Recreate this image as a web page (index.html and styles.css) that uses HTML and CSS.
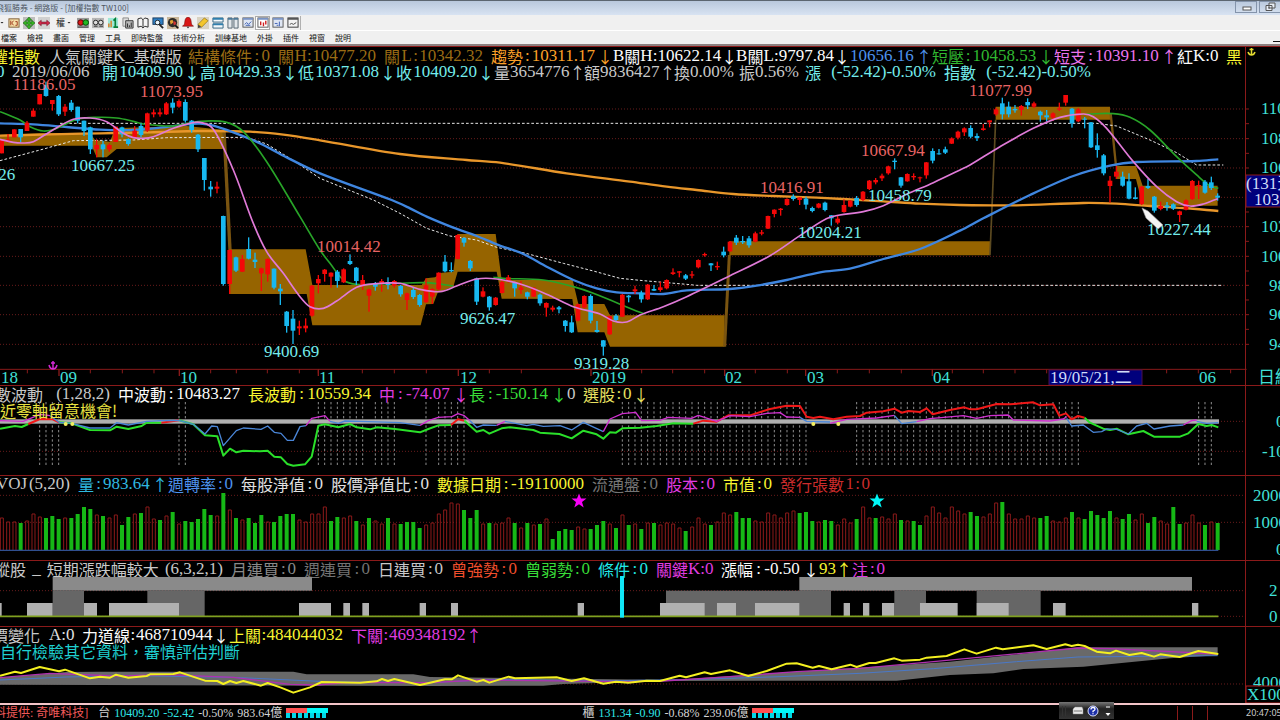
FILE: index.html
```html
<!DOCTYPE html>
<html lang="zh-Hant">
<head>
<meta charset="utf-8">
<title>加權指數 TW100</title>
<link rel="stylesheet" href="styles.css">
</head>
<body>
<header class="titlebar">
  <span class="title">飛狐勝券 - 網路版 - [加權指數 TW100]</span>
  <div class="winbtns">
    <button class="winbtn" aria-label="最小化"><svg width="22" height="12"><rect x="7" y="6" width="8" height="3" fill="#fff" stroke="#555"/></svg></button>
    <button class="winbtn" aria-label="還原"><svg width="22" height="12"><path d="M9 2h6v5h-6zM6 4.500h6v5h-6z" fill="#e8eef6" stroke="#555"/><path d="M8 6.500h2v1h-2z" fill="#555"/></svg></button>
  </div>
</header>
<nav class="toolbar" aria-label="工具列">
  <span class="caret"></span>
  <button class="tool" aria-label="K線"><svg viewBox="0 0 13 13"><rect x="1" y="2" width="11" height="9" fill="#f6dfa8" stroke="#7a5a33"/><path d="M3 4v5M6 4l-2 2.500 2 2.500M8 5h2v4h-2" stroke="#9a3418" fill="none"/></svg></button>
  <button class="tool" aria-label="移動"><svg viewBox="0 0 13 13"><rect width="13" height="13" fill="#bdbdbd"/><path d="M6.500 0l3 3.500h-2v2h2v-2l3.500 3-3.500 3v-2h-2v2h2l-3 3.500-3-3.500h2v-2h-2v2l-3.500-3 3.500-3v2h2v-2h-2z" fill="#39b525" stroke="#145c10" stroke-width=".6"/></svg></button>
  <button class="tool" aria-label="水平線"><svg viewBox="0 0 13 13"><rect width="13" height="13" fill="#d0d0d0"/><path d="M0 6.500l3.500-3v2h6v-2l3.500 3-3.500 3v-2h-6v2z" fill="#d12a4a" stroke="#6a1024" stroke-width=".6"/></svg></button>
  <button class="adjust">權<span class="caret"></span></button>
  <button class="tool" aria-label="紅綠燈"><svg viewBox="0 0 13 13"><rect y="1" width="13" height="11" fill="#9a9a9a"/><circle cx="4" cy="6" r="3" fill="#e01818" stroke="#500"/><circle cx="9.500" cy="6" r="3" fill="#22b822" stroke="#040"/><path d="M1 11h11" stroke="#444"/></svg></button>
  <button class="tool" aria-label="望遠鏡"><svg viewBox="0 0 13 13"><rect y="1" width="13" height="11" fill="#b5b5b5"/><circle cx="4" cy="6" r="2.500" fill="#ddd" stroke="#222"/><circle cx="9.500" cy="6" r="2.500" fill="#ddd" stroke="#222"/><path d="M2 10h4M8 10h4" stroke="#333"/></svg></button>
  <button class="tool" aria-label="報表"><svg viewBox="0 0 13 13"><rect x="1" y="1" width="11" height="11" fill="#9fe8d8"/><path d="M2 11v-4M4.500 11v-7" stroke="#e07a20" stroke-width="1.500"/><path d="M7 4l2-2v9M7 11h5" stroke="#088038" stroke-width="1.800" fill="none"/></svg></button>
  <button class="tool" aria-label="複製"><svg viewBox="0 0 13 13"><path d="M1 1h6v9h-6z" fill="#ddd" stroke="#888"/><path d="M4 4h8v8h-8z" fill="#bbb" stroke="#333"/><path d="M6 11v-4M8 11v-2M10 11v-5" stroke="#222"/></svg></button>
  <button class="tool" aria-label="說明書"><svg viewBox="0 0 13 13"><path d="M1 2l3.500-1 2 2 2-2 3.500 1v9l-3.500-1-2 2-2-2-3.500 1zM6.500 3v8" fill="#f4f4f4" stroke="#222"/></svg></button>
  <button class="tool" aria-label="查詢"><svg viewBox="0 0 13 13"><rect x="1" y="1" width="11" height="7" fill="#2f7fc4" stroke="#17395c"/><circle cx="6" cy="6" r="2.500" fill="#e8f6ff" stroke="#222"/><path d="M8 8l4 4" stroke="#222" stroke-width="2"/></svg></button>
  <button class="tool" aria-label="搜尋"><svg viewBox="0 0 13 13"><rect width="13" height="13" fill="#c9b79a"/><circle cx="6" cy="6" r="5" fill="#2d2a26"/><path d="M3 4l3-1 1 3-3 2z" fill="#e0a030"/><path d="M7 4l3 2-1 3-2-1z" fill="#c33"/><path d="M9 9l3 3" stroke="#111" stroke-width="2"/></svg></button>
  <button class="tool" aria-label="警示"><svg viewBox="0 0 13 13"><path d="M6.500 0c4 1 3 5 4 8l2 2h-12l2-2c1-3 0-7 4-8z" fill="#d81616" stroke="#6c0808" stroke-width=".6"/><path d="M5 10.500h3l-1.500 2z" fill="#333"/></svg></button>
  <button class="tool" aria-label="畫筆"><svg viewBox="0 0 13 13"><rect width="13" height="13" fill="#d8d2c2"/><path d="M1 8l7-7 4 3-7 7z" fill="#f3c62c" stroke="#8a6a10" stroke-width=".7"/><path d="M1 8l4 3-4 1z" fill="#444"/></svg></button>
  <button class="tool" aria-label="橫排"><svg viewBox="0 0 13 13"><path d="M1 1h11v4.500h-11zM1 7.500h11v4.500h-11z" fill="#f4f8fb" stroke="#2f627f"/><path d="M1 2h11M1 8h11" stroke="#2f7fae" stroke-width="2"/></svg></button>
  <button class="tool" aria-label="直排"><svg viewBox="0 0 13 13"><path d="M1 1h4.500v11h-4.500zM7.500 1h4.500v11h-4.500z" fill="#e3e8ec" stroke="#4e5f6b"/><path d="M1 2h5M7 2h5" stroke="#4b7898" stroke-width="2"/></svg></button>
  <button class="tool" aria-label="日線圖"><svg viewBox="0 0 13 13"><rect x="1" y="1" width="11" height="10" fill="#dfe6f3" stroke="#555"/><path d="M1 2h11" stroke="#7a93c4" stroke-width="2"/><path d="M3 8l2-2 2 2 3-3M4 9h5" stroke="#3a5bb0" fill="none"/></svg></button>
  <button class="tool pressed" aria-label="K線圖"><svg viewBox="0 0 13 13"><rect x="1" y="1" width="11" height="10" fill="#fff" stroke="#555"/><path d="M1 2h11" stroke="#7a93c4" stroke-width="2"/><path d="M4 5v4M7 6v4M9.500 4v4" stroke="#d02020" stroke-width="1.500"/></svg></button>
  <button class="tool" aria-label="分時圖"><svg viewBox="0 0 13 13"><rect x="1" y="1" width="11" height="10" fill="#dfe6f3" stroke="#555"/><path d="M1 2h11" stroke="#7a93c4" stroke-width="2"/><path d="M3 7h3M5 9h2M8 5v5" stroke="#3a5bb0"/></svg></button>
  <button class="tool" aria-label="走勢圖"><svg viewBox="0 0 13 13"><rect x="1" y="1" width="11" height="10" fill="#f4f4f4" stroke="#333"/><path d="M1 2h11" stroke="#555" stroke-width="2"/><path d="M3 8l2-1 2 1 3-2" stroke="#444" fill="none"/></svg></button>
  <span class="toolend"></span>
</nav>
<nav class="menubar" aria-label="選單">
  <button>檔案</button><button>檢視</button><button>畫面</button><button>管理</button><button>工具</button><button>即時監盤</button><button>技術分析</button><button>訓練基地</button><button>外掛</button><button>插件</button><button>視窗</button><button>說明</button>
  <span class="mdi-min"></span>
</nav>

<main class="charts">
  <section class="panel panel-price">
    <div class="readout" id="r-name" data-start="-24"></div>
    <div class="readout" id="r-quote" data-start="-4"></div>
    <svg class="plot" viewBox="0 0 1280 305">
      <g transform="scale(.33333)" id="price"></g>
      <g class="t high">
        <text x="13" y="10">11186.05</text><text x="140" y="17">11073.95</text><text x="317" y="172">10014.42</text>
        <text x="760" y="113">10416.91</text><text x="861" y="76">10667.94</text><text x="969" y="16">11077.99</text>
      </g>
      <g class="t low">
        <text x="-40" y="100">9999.26</text><text x="71" y="91">10667.25</text><text x="264" y="277">9400.69</text><text x="460" y="244">9626.47</text>
        <text x="574" y="289">9319.28</text><text x="798" y="158">10204.21</text><text x="868" y="121">10458.79</text><text x="1147" y="155">10227.44</text>
      </g>
      <path d="M1142 128l6 3 15 14-5 4-12-11z" fill="#f4f4f4" stroke="#999" stroke-width=".6"/>
      <path d="M53 281v8M51 283h4M49 285q1 4 4 4q3 0 4-4" stroke="#d42ad4" stroke-width="1.500" fill="none"/>
      <g class="t axis">
        <text x="1" y="303">18</text><text x="60" y="303">09</text><text x="180" y="303">10</text><text x="319" y="303">11</text><text x="460" y="303">12</text>
        <text x="592" y="303">2019</text><text x="725" y="303">02</text><text x="807" y="303">03</text><text x="933" y="303">04</text><text x="1199" y="303">06</text>
        <text x="1258" y="303">日線</text>
        <text x="1261" y="34">11000</text><text x="1261" y="64">10800</text><text x="1261" y="93">10600</text><text x="1261" y="152">10200</text>
        <text x="1261" y="182">10000</text><text x="1269" y="211">9800</text><text x="1269" y="240">9600</text><text x="1269" y="270">9400</text>
      </g>
      <rect x="1049" y="290" width="93" height="15" fill="#00007c" stroke="#4a1050"/><text class="t cursor" x="1050" y="303">19/05/21,二</text>
      <rect x="1246" y="95" width="40" height="32" fill="#00007c" stroke="#8b1a1a"/>
      <text class="t cursor" x="1246" y="109">(131天</text><text class="t cursor" x="1254" y="125">10311</text>
    </svg>
    <svg class="anchor" viewBox="0 0 9 9"><path d="M4.500 1v7M2.500 2.500h4M1 5q1 3 3.500 3q2.500 0 3.500-3" stroke="#e4dc30" stroke-width="1.500" fill="none"/></svg>
  </section>

  <section class="panel">
    <div class="readout" id="r-wave" data-start="-21"></div>
    <p class="note note-over">接近零軸留意機會!</p>
    <svg class="plot" viewBox="0 0 1280 73">
      <g transform="translate(0 -22) scale(.33333)" id="wave"></g>
      <g class="t axis"><text x="1276" y="25">0</text><text x="1262" y="55">-1000</text></g>
    </svg>
  </section>

  <section class="panel">
    <div class="readout" id="r-volume" data-start="-4"></div>
    <svg class="plot" viewBox="0 0 1280 68">
      <g transform="translate(0 -112) scale(.33333)" id="volume"></g>
      <path d="M579 1.500l2 5h5.500l-4.500 3.500 1.700 5.500-4.700-3.300-4.700 3.300 1.700-5.500-4.500-3.500h5.500z" fill="#f800f8"/>
      <path d="M877 1.500l2 5h5.500l-4.500 3.500 1.700 5.500-4.700-3.300-4.700 3.300 1.700-5.500-4.500-3.500h5.500z" fill="#00f8f8"/>
      <g class="t axis"><text x="1253" y="9">2000</text><text x="1253" y="36">1000</text><text x="1276" y="63">0</text></g>
    </svg>
  </section>

  <section class="panel">
    <div class="readout" id="r-trend" data-start="-6"></div>
    <svg class="plot" viewBox="0 0 1280 49">
      <g transform="translate(0 -197) scale(.33333)" id="trend"></g>
      <g class="t axis"><text x="1269" y="19">2</text><text x="1269" y="45">0</text></g>
    </svg>
  </section>

  <section class="panel">
    <div class="readout" id="r-force" data-start="-8"></div>
    <p class="note note-cyan">自行檢驗其它資料，審慎評估判斷</p>
    <svg class="plot" viewBox="0 0 1280 44">
      <g transform="translate(0 -279) scale(.33333)" id="force"></g>
      <g class="t axis"><text x="1253" y="29">4000</text></g>
      <rect x="1246" y="27" width="40" height="17" fill="#000" stroke="#b01c1c"/>
      <text class="t axis" x="1247" y="41">X1000</text>
    </svg>
  </section>
</main>

<footer class="status">
  <div class="quote quote-main"><span class="src">料提供: 奇唯科技]</span><span>台</span><span class="c">10409.20</span><span class="c">-52.42</span><span>-0.50%</span><span>983.64億</span><i class="meter"></i></div>
  <div class="quote"><span>櫃</span><span class="c">131.34</span><span class="c">-0.90</span><span>-0.68%</span><span>239.06億</span><i class="meter"></i></div>
  <div class="cells"><i></i><i></i><i></i></div>
  <time>20:47:05</time>
  <div class="tray">
    <svg viewBox="0 0 55 17"><g fill="#333"><path d="M3 4h1v10h-1zM6 4h1v10h-1z"/></g><path d="M14 7l2-2h7l1 2v5h-10z" fill="#e8e8e8" stroke="#888" stroke-width=".5"/><path d="M15 9h8" stroke="#777"/><circle cx="34" cy="9" r="5" fill="#1c2fa8" stroke="#dfe4ff"/><path d="M32 7.500q0-2 2-2t2 1.700q0 1-2 2v1M34 11.300v1" stroke="#fff" stroke-width="1.300" fill="none"/><path d="M47 5h4" stroke="#fff"/><path d="M46.500 11h5l-2.500 3z" fill="#fff"/></svg>
  </div>
</footer>
<script src="chart.js"></script>
</body>
</html>
```

FILE: styles.css
```css
* { box-sizing: border-box; margin: 0; padding: 0; }
body { background: #000; color: #ccc; font-family: "Noto Sans CJK TC", sans-serif; overflow-x: hidden; }
button { border: 0; background: none; font: inherit; color: inherit; }

.titlebar { display: flex; justify-content: space-between; height: 15px; border-top: 1px solid #5c6670; background: linear-gradient(#b9c8dc, #d8e3f2); }
.title { margin-left: -4px; font-size: 8px; line-height: 14px; color: #4d565f; white-space: nowrap; }
.winbtns { display: flex; gap: 2px; margin-right: -1px; }
.winbtn { width: 22px; height: 12px; border: 1px solid #8494ab; display: flex; align-items: center; justify-content: center; overflow: hidden; }

.toolbar { display: flex; align-items: center; height: 16px; background: #f0f0f0; border-bottom: 1px solid #fff; }
.tool { width: 15px; height: 14px; flex: none; display: flex; align-items: center; justify-content: center; }
.tool svg { width: 12px; height: 12px; }
.pressed { background: #fff; border: 1px solid #aaa; }
.toolend { width: 1px; height: 14px; background: #b0b0b0; }
.toolbar > .caret { margin-right: 2px; }
.caret { width: 4px; height: 2px; background: #222; clip-path: polygon(0 0, 100% 0, 50% 100%); }
.adjust { display: flex; align-items: center; gap: 2px; width: 24px; padding-left: 5px; font-size: 9px; line-height: 12px; color: #222; }

.menubar { display: flex; align-items: center; gap: 10px; height: 15px; padding-left: 1px; background: #f0f0f0; border-bottom: 2px solid #8c8080; font-size: 8px; line-height: 12px; color: #111; }
.mdi-min { margin-left: auto; align-self: flex-end; width: 7px; height: 3px; border-top: 1px solid #111; }

.charts { position: relative; }
.charts::after { content: ""; position: absolute; top: 0; bottom: 0; left: 97.25%; width: 1px; background: #8b1a1a; }
.panel { position: relative; border-top: 1px solid #8b1a1a; }
.panel-price { padding-top: 1px; }
.readout { display: flex; height: 16px; font-size: 16px; line-height: 16px; white-space: nowrap; }
.item { display: flex; flex: none; justify-content: space-between; }
.num { font-family: "Liberation Serif", serif; font-size: 17px; }
.note { font-size: 16px; line-height: 16px; white-space: nowrap; }
.note-over { position: absolute; left: -16px; top: 16px; color: #e8e040; }
.note-cyan { color: #1fd0d0; }
.plot { display: block; width: 100%; height: auto; overflow: visible; }
.anchor { position: absolute; top: 0; left: 97.4%; width: 9px; height: 9px; }

.t { font-family: "Liberation Serif", "Noto Sans CJK TC", serif; font-size: 17px; }
.high { fill: #e86464; }
.low { fill: #74ecec; }
.axis { fill: #40e0d8; }
.cursor { fill: #d0dcf8; }

.status { position: relative; display: flex; align-items: center; height: 17px; border-top: 2px solid #f3c4c8; font-size: 12px; line-height: 14px; white-space: nowrap; }
.quote { display: flex; align-items: center; gap: 4px; font-family: "Liberation Serif", "Noto Sans CJK TC", serif; font-size: 12px; color: #d4d4d4; }
.quote-main { flex: 0 0 45.5%; }
.src { color: #f05a5a; margin-left: -6px; margin-right: 6px; }
.c { color: #2fe8e8; }
.meter { width: 42px; height: 10px; background: linear-gradient(90deg, #ff5050 50%, #00f8f8 50%) 0 0 / 100% 5px no-repeat, repeating-linear-gradient(90deg, #00d8e8 0 4px, #000 4px 6px) 0 100% / 100% 5px no-repeat; }
.cells { display: flex; gap: 14px; margin-left: auto; margin-right: 38px; }
.cells i { width: 1px; height: 14px; background: #8b1a1a; }
time { flex: none; width: 34px; font-family: "Noto Sans", sans-serif; font-size: 9px; }
.tray { position: absolute; left: 82.7%; top: -3px; width: 55px; height: 17px; background: linear-gradient(#777, #222 40%, #333); }
.tray svg { display: block; }
```

FILE: chart.js
```js
const NS = "http://www.w3.org/2000/svg";
const CELL = 8.17;

/* ---- readout rows: [text, colour, trailing space] ---- */
const W = "#fcfcfc", G = "#c8c8c8", D = "#747474", Y = "#f8f430", C = "#74ecec", M = "#e03ce0",
      R = "#cc2c2c", GR = "#38dc38", BR = "#9a6c14", OR = "#fca028", BL = "#4e92ec";
const readouts = {
  "r-name": [["加權指數", Y, 1], ["人氣關鍵K_基礎版", G, 1], ["結構條件:0", BR, 1], ["關H:10477.20", BR, 1], ["關L:10342.32", BR, 1],
    ["趨勢:10311.17↓", OR, 0], ["B關H:10622.14↓", W, 0], ["B關L:9797.84↓", W, 0], ["10656.16↑", BL, 0], ["短壓:10458.53↓", "#30b830", 0],
    ["短支:10391.10↑", "#ec74ec", 0], ["紅K:0", W, 1], ["黑", Y, 0]],
  "r-quote": [["0", C, 1], ["2019/06/06", G, 1], ["開10409.90↓", C, 0], ["高10429.33↓", C, 0], ["低10371.08↓", C, 0], ["收10409.20↓", C, 0],
    ["量3654776↑", G, 0], ["額9836427↑", G, 0], ["換0.00%", G, 1], ["振0.56%", G, 1], ["漲(-52.42)-0.50%", C, 1], ["指數(-52.42)-0.50%", C, 0]],
  "r-wave": [["指數波動(1,28,2)", G, 1], ["中波動:10483.27", W, 1], ["長波動:10559.34", Y, 1], ["中:-74.07↓", M, 0], ["長:-150.14↓", GR, 0],
    ["0", G, 1], ["選股:0↓", "#e8e060", 0]],
  "r-volume": [["VOJ(5,20)", G, 1], ["量:983.64↑", "#30b8e0", 0], ["週轉率:0", BL, 1], ["每股淨值:0", "#e0e0e0", 1], ["股價淨值比:0", "#e0e0e0", 1],
    ["數據日期:-19110000", Y, 1], ["流通盤:0", D, 1], ["股本:0", M, 1], ["市值:0", Y, 1], ["發行張數1:0", R, 0]],
  "r-trend": [["縱股_短期漲跌幅較大(6,3,2,1)", G, 1], ["月連買:0", "#8a8a8a", 1], ["週連買:0", D, 1], ["日連買:0", G, 1], ["曾強勢:0", "#f04e2c", 1],
    ["曾弱勢:0", GR, 1], ["條件:0", "#20e8e8", 1], ["關鍵K:0", M, 1], ["漲幅:-0.50↓", W, 0], ["93↑", Y, 0], ["注:0", M, 0]],
  "r-force": [["價變化", G, 1], ["A:0", "#e0e0e0", 1], ["力道線:468710944↓", W, 0], ["上關:484044032", Y, 1], ["下關:469348192↑", M, 0]]
};
for (const [id, items] of Object.entries(readouts)) {
  const row = document.getElementById(id);
  let cells = 0, edge = 0;
  items.forEach(([text, color, gap], i) => {
    const item = document.createElement("span");
    item.className = "item";
    item.style.color = color;
    const n = [...text].reduce((s, ch) => s + (ch.charCodeAt(0) > 127 ? 2 : 1), 0);
    item.style.width = Math.round((cells + n) * CELL) - edge + "px";
    if (gap) item.style.marginRight = "8px";
    if (i === 0) item.style.marginLeft = row.dataset.start + "px";
    cells += n + gap;
    edge = Math.round((cells - gap) * CELL) + (gap ? 8 : 0);
    for (const part of text.match(/[↑↓]|[^\x00-\x7f↑↓]+|[A-Z_]+|:|[^A-Z_:↑↓\u0080-\uffff]+/g)) {
      const s = document.createElement("span");
      if (part.charCodeAt(0) < 128) s.className = "num";
      s.textContent = part;
      item.append(s);
    }
    row.append(item);
  });
}

/* ---- drawing helpers; three drawing units to one pixel ---- */
const X = k => 5 + 19 * k;
const add = (id, tag, attrs) => {
  const e = document.createElementNS(NS, tag);
  for (const a in attrs) e.setAttribute(a, attrs[a]);
  document.getElementById(id).append(e);
};
const path = (id, d, stroke, w, more) => add(id, "path", { d, stroke, "stroke-width": w, fill: "none", ...more });
const rect = (id, x, y, x2, y2, fill) => add(id, "rect", { x, y, width: x2 - x, height: y2 - y, fill });
const poly = (id, points, fill) => add(id, "polygon", { points, fill });
const line = (id, pts, stroke, w, more) => path(id, "M" + pts, stroke, w, { "stroke-linejoin": "round", ...more });
const smooth = (id, pts, stroke, w, more) => {
  const p = pts.split(" ").map(s => s.split(",").map(Number));
  let d = "M" + p[0];
  for (let i = 0; i < p.length - 1; i++) {
    const a = p[i - 1] || p[i], b = p[i], c = p[i + 1], e = p[i + 2] || c;
    const t = (c[0] - b[0]) / 3, m1 = (c[1] - a[1]) / (c[0] - a[0]), m2 = (e[1] - b[1]) / (e[0] - b[0]);
    d += `C${b[0] + t},${b[1] + m1 * t} ${c[0] - t},${c[1] - m2 * t} ${c}`;
  }
  path(id, d, stroke, w, more);
};
const grid = (id, ys) => ys.forEach(y => path(id, `M0 ${y}H3740`, "#6a1c1c", 3, { "stroke-dasharray": "3 6" }));

/* ---- price panel ---- */
grid("price", [87, 176, 264, 352, 440, 529, 616, 704, 793]);
[87, 131, 176, 220, 264, 308, 352, 396, 440, 484, 529, 573, 616, 660, 704, 748, 793].forEach(y => path("price", `M3735 ${y}h12`, "#8b1a1a", 3));
const BAND = "#966400";
poly("price", "0,165 120,160 270,158 285,180 330,185 345,145 430,142 560,138 672,150 672,207 350,207 320,232 290,232 275,197 0,197", BAND);
path("price", "M672 150L690 510", "#7a5410", 10);
poly("price", "690,508 917,508 937,615 1265,615 1278,595 1305,592 1325,578 1360,575 1373,462 1487,462 1505,600 1718,600 1735,672 1813,672 1830,706 2174,706 2174,800 1830,800 1813,757 1733,757 1717,657 1505,656 1490,575 1373,575 1360,620 1313,638 1300,672 1278,673 1262,736 937,736 920,642 690,642", BAND);
path("price", "M2174 800L2188 525", "#7a5410", 9);
poly("price", "2188,484 2970,484 2970,526 2188,526", BAND);
path("price", "M2970 526L2987 119", "#5c4a20", 5);
poly("price", "2987,80 3330,80 3330,119 2987,119", BAND);
path("price", "M3332 100L3348 258", "#7a5410", 7);
poly("price", "3348,258 3408,258 3428,317 3653,317 3653,377 3428,377 3408,297 3348,297", BAND);

const dash = { "stroke-dasharray": "8 6" };
line("price", "180,130 3290,130 3350,138 3450,180 3530,218 3590,255 3670,255", "#e8e8e8", 3, dash);
line("price", "0,242 120,210 220,182 400,180 500,173 740,172 800,192 870,235 960,295 1120,360 1200,400 1280,445 1350,468 1430,480 1490,502 1570,518 1690,550 1780,573 1860,595 1930,602 2060,613 2090,616 3670,616", "#e8e8e8", 3, dash);
smooth("price", "0,167 150,163 300,160 450,157 600,153 750,155 850,164 960,181 1200,222 1400,240 1500,248 1700,280 1890,305 2000,320 2090,330 2200,342 2320,348 2450,353 2530,357 2650,364 2760,371 2880,375 3050,376 3250,369 3350,371 3450,378 3550,384 3655,393", "#e8962a", 7);
smooth("price", "0,130 100,133 200,141 300,149 400,150 480,143 560,133 600,131 640,137 700,157 780,190 860,232 960,280 1175,360 1230,385 1280,410 1360,443 1430,468 1490,493 1570,522 1640,560 1720,600 1790,625 1850,637 1920,640 1990,642 2060,631 2190,627 2270,617 2360,600 2460,577 2550,566 2650,537 2760,507 2880,452 2950,415 3090,345 3220,288 3330,257 3410,246 3590,243 3655,238", "#3f86e0", 7);
smooth("price", "0,95 60,120 90,140 130,153 165,147 230,118 290,112 350,114 400,124 430,132 520,138 600,124 680,127 730,155 800,245 900,410 960,510 990,550 1030,600 1070,613 1190,610 1280,608 1360,618", "#28a428", 5);
smooth("price", "1480,592 1510,595 1630,600 1720,620 1780,640 1920,697 1935,702", "#28a428", 5);
smooth("price", "3260,102 3340,101 3390,112 3450,150 3530,230 3590,285 3630,318 3655,325", "#28a428", 5);

/* colour, wick top, body top, body bottom, wick bottom */
const candles = `r178,178,220,220 r162,178,185,188 r148,148,172,172 c147,147,172,187 r123,128,153,153 r85,92,110,110 r42,42,73,73 c5,15,48,50 r60,60,72,92 c45,48,103,108
r72,80,95,108 c60,68,90,95 c80,80,122,130 c122,122,153,168 c140,142,208,222 r178,195,208,232 c182,193,208,232 r190,195,208,215 r140,140,186,186 c140,142,163,172
c175,177,192,197 r138,152,172,172 c130,138,165,172 r98,100,152,156 r88,97,103,112 r85,97,103,110 r66,70,103,105 c55,68,83,100 r58,63,80,83 c58,66,122,128
c120,122,150,158 c162,164,208,216 c234,234,300,332 c303,320,328,350 r305,320,326,340 c407,408,612,617 r508,510,612,642 c530,532,572,576 r525,537,575,576 c472,507,536,538
c518,539,546,564 r563,565,580,633 r535,537,583,605 c565,566,623,628 c612,626,634,675 c693,695,738,758 c690,716,752,792 r722,739,745,765 r715,737,745,757 r615,617,707,710
r585,597,610,640 r567,569,582,605 r577,578,590,623 c570,575,603,623 r565,568,607,609 c523,543,552,555 c561,563,603,615 r585,600,616,630 r626,628,647,695 c606,612,620,632
r597,603,612,635 c592,606,615,628 r600,603,617,623 c615,618,643,650 r638,640,660,690 c621,630,651,657 c642,645,675,680 r595,616,667,668 r625,627,650,672 r577,578,628,630
c525,545,574,577 c547,570,574,577 r463,465,537,538 c472,474,488,500 c540,543,565,573 c593,595,665,675 r622,634,650,652 c648,650,682,692 r651,653,675,677 r600,606,639,640
r585,592,603,608 c605,607,625,650 r603,622,630,642 c635,637,650,658 r622,623,650,651 c641,644,670,677 r667,669,683,710 r677,683,689,695 c678,682,688,700 c720,722,738,755
c707,727,757,759 r671,673,722,724 r646,648,683,685 c643,648,722,730 c723,750,756,758 c780,781,800,827 r707,708,763,765 c702,707,720,725 r642,644,710,711 c645,647,652,667
r617,628,634,642 c632,638,658,668 r612,614,658,660 c615,627,632,633 r605,622,630,635 r598,600,625,628 r565,577,582,585 r573,574,578,592 c582,586,596,600 r573,583,587,595
r538,540,562,565 r518,522,526,530 c549,550,556,573 r545,558,562,570 c500,515,526,532 r483,485,514,515 c465,473,488,495 c468,483,487,492 c468,475,496,503 r455,460,485,487
r450,457,461,466 r407,408,446,447 r388,389,402,412 r384,386,390,407 r355,357,375,377 c343,349,357,362 r352,352,360,375 c350,356,374,388 c380,384,393,397 r369,371,383,385
c365,368,390,394 c405,406,415,437 r405,416,428,433 r358,375,396,398 r360,362,380,382 c348,354,375,380 r333,335,360,363 r300,302,327,330 r294,300,307,313 r281,287,295,303
r257,259,280,284 c235,242,246,268 c291,292,317,323 r280,282,304,305 r280,288,292,300 r290,292,295,307 r246,247,286,296 c205,213,242,250 c207,220,223,224 c200,208,218,222
r172,175,191,192 r152,155,173,178 r142,145,157,168 c136,144,170,175 c160,168,174,183 r132,145,150,152 r121,121,127,142 r83,88,103,107 c53,70,103,118 c65,80,103,112
c75,87,91,98 r75,78,90,107 c55,66,76,87 r65,70,80,84 c92,95,106,125 c90,106,112,125 r97,100,113,123 r68,85,89,93 r45,45,68,77 c84,86,130,143
r84,88,124,126 c111,116,119,145 c126,127,202,204 c160,196,210,233 c222,226,280,286 r288,302,318,368 r258,275,290,297 c275,290,317,320 c280,304,356,358 c322,352,357,358
r318,320,372,375 c297,318,324,327 c348,350,392,398 r365,378,387,391 c366,376,382,392 c370,373,386,390 r392,394,405,426 r358,361,389,391 r300,303,357,360 r302,315,319,357
c300,305,338,341 c290,307,324,330 c340,347,353,362`.split(/\s+/);
candles.forEach((s, k) => {
  const [h, t, b, l] = s.slice(1).split(",").map(Number), col = s[0] === "r" ? "#f40808" : "#18b8f0";
  rect("price", X(k) - 2, h, X(k) + 2, l, col);
  rect("price", X(k) - 7, t, X(k) + 7, b, col);
});
smooth("price", "0,178 40,187 70,189 100,185 150,155 220,118 270,114 320,125 370,160 400,173 430,175 460,170 520,145 570,130 600,127 640,148 700,270 760,430 800,515 850,580 900,650 930,680 970,685 1010,663 1070,622 1130,611 1200,610 1260,628 1320,635 1370,618 1430,597 1490,597 1570,615 1650,647 1720,680 1800,702 1840,723 1880,726 1920,705 1990,680 2060,650 2190,587 2310,527 2410,460 2490,412 2590,395 2650,377 2720,343 2800,308 2880,270 2910,255 3000,200 3100,145 3180,112 3250,102 3280,110 3320,145 3400,245 3470,320 3530,365 3570,378 3610,372 3653,356", "#e07ad8", 5);
path("price", "M0 868H3740", "#8b1a1a", 3);
[82, 271, 367, 462, 632, 709, 802, 898, 955, 1087, 1183, 1279, 1468, 1564, 1925, 2018, 2114, 2266, 2362, 2512, 2608, 2704, 2857, 2950, 3045, 3140, 3500, 3595, 3692].forEach(x => path("price", `M${x} 868v12`, "#8b1a1a", 3));
[177, 538, 955, 1375, 1773, 2174, 2417, 2797].forEach(x => path("price", `M${x} 868v20`, "#8b1a1a", 4));

/* ---- wave panel ---- */
grid("wave", [124, 214]);
const signal = [6, 7, 8, 9, 28, 29, 50, 51, 52, 53, 54, 55, 56, 57, 59, 60, 61, 62, 67, 69, 70, 71, 72, 73, 189, 190, 191];
for (let k = 98; k <= 127; k++) signal.push(k);
for (let k = 135; k <= 170; k++) signal.push(k);
signal.forEach(k => path("wave", `M${X(k)} 66V258`, "#909090", 3, { "stroke-dasharray": "7 7" }));
rect("wave", 0, 118, 3657, 131, "#b0b0b0");
line("wave", "0,146 45,138 65,141 85,132", "#2ae02a", 6);
line("wave", "85,132 120,117 158,118 177,127", "#f01818", 6);
line("wave", "177,127 215,130 270,150 330,151 350,140 385,147 425,138 440,128 484,128", "#2ae02a", 6);
line("wave", "484,128 537,121", "#f01818", 6);
line("wave", "537,121 580,133 615,166 652,169 670,227 690,206 709,217 730,212 780,214 803,212 823,230 843,232 862,252 880,257 915,253 935,230 955,137 975,133 1015,142 1050,132 1070,142 1110,148 1130,142 1185,147 1260,157 1285,147 1315,136 1353,135", "#2ae02a", 6);
line("wave", "1353,135 1374,118 1393,122", "#f01818", 6);
line("wave", "1393,122 1430,155 1450,150 1468,161 1505,145 1530,142 1600,150 1620,158 1678,162 1715,175 1750,152 1790,163 1810,176 1830,157 1848,158 1867,145 1920,143 1970,138 2020,130 2080,131", "#2ae02a", 6);
line("wave", "2080,131 2110,122 2150,125 2185,106 2250,106 2310,87 2360,77 2400,78 2420,110 2440,114 2460,110 2500,118 2540,110 2580,108 2600,98 2650,94 2683,86 2705,98 2725,93 2760,96 2780,85 2798,103 2850,90 2893,82 2912,88 2930,88 2990,72 3030,73 3100,67 3120,76 3160,73 3178,107 3198,100 3215,118 3234,108 3254,113", "#f01818", 6);
line("wave", "3254,113 3270,128 3310,146 3330,150 3350,146 3385,163 3430,153 3462,170 3540,170 3565,160 3595,132 3620,138 3635,135 3655,142", "#2ae02a", 6);
const B2 = "#4a86d8", M2 = "#d030d0";
line("wave", "0,122 70,124 120,103 150,107", M2, 4);
line("wave", "150,107 177,127 215,130 270,144 330,144 350,128 385,135 440,124 484,122 537,121 580,133 615,162 635,138 652,140 670,197 709,152 730,144 783,148 803,138 823,157 843,160 862,181 880,181 900,140 918,137", B2, 4);
line("wave", "918,137 935,115 975,107 990,124", M2, 4);
line("wave", "990,124 1015,130 1035,123 1080,124 1200,128 1260,136", B2, 4);
line("wave", "1260,136 1285,122 1315,112 1356,110 1374,101 1393,107 1410,122", M2, 4);
line("wave", "1410,122 1430,142 1450,135 1490,136", B2, 4);
line("wave", "1490,136 1515,124", M2, 4);
line("wave", "1515,124 1580,137 1600,133 1630,139 1680,137 1715,150 1750,127 1810,155", B2, 4);
line("wave", "1810,155 1830,117 1867,101 1907,97 1925,122 1980,121 2005,112 2075,115 2095,106 2150,124 2190,107 2250,110 2300,100 2340,98 2360,111 2400,112", M2, 4);
line("wave", "2400,112 2420,124 2490,126", B2, 4);
line("wave", "2490,130 2540,118 2630,114 2683,106", M2, 4);
line("wave", "2683,106 2705,131 2750,125", B2, 4);
line("wave", "2750,125 2790,116 2890,107 2930,115 2970,107 3025,105 3040,120 3150,123 3190,117 3200,110", M2, 4);
line("wave", "3200,115 3215,138 3250,135 3280,157 3305,155 3320,147 3350,148 3385,162 3410,138 3440,130 3462,147 3510,138 3550,135", B2, 4);
line("wave", "3550,135 3575,122 3590,120", M2, 4);
line("wave", "3590,124 3620,130 3655,128", B2, 4);
[197, 217, 2440, 2515].forEach(x => add("wave", "circle", { cx: x, cy: 132, r: 6, fill: "#f4f060" }));

/* ---- volume panel: sign gives direction, size the height ---- */
grid("volume", [346, 427]);
const volume = `-32 -28 -28 27 -29 -36 -33 32 34 31 -32 32 36 43 41 -35 34 -32 -35 25 33 -36 37 -43 -31 30 -34 38 -26 29 28 31 41 35 -34 57 -40 32 -30 32 27 35 -28 28 34 36 36 -30 -28 -36 -36 -43 29 33 -32 -34 29 -25 32 -29 -26 32 -26 26 28 28 22 -25
-27 -36 -40 -47 -46 40 32 40 -26 27 -26 -27 -32 27 -22 27 -25 26 -31 11 19 21 20 -23 -21 21 25 29 -26 22 -35 25 -26 21 -27 27 -25 -27 -26 -22 19 -23 -32 -26 25 -28 -37 -35 38 32 32 -29 -28 -37 -35 -32 -37 -39 37 38 29 -28 30 29 -25 -31 -27 31
-43 -32 32 -33 -31 -36 30 -29 29 25 -34 -43 -37 -32 -43 -39 -36 38 34 -33 -36 -47 48 -36 -31 -31 -34 -32 32 34 -29 -28 -32 38 -32 31 39 35 32 39 -32 31 36 -30 -36 27 33 -29 -26 43 26 -27 -35 -27 25 -28 27`.split(/\s+/).map(Number);
volume.forEach((v, k) => {
  const top = 510 - Math.abs(v) * 3;
  if (v > 0) rect("volume", X(k) - 6, top, X(k) + 6, 510, "#16b816");
  else path("volume", `M${X(k) - 4} 510V${top}h9V510`, "#8e1a1a", 3);
});
path("volume", "M0 511H3655", "#2f4f8f", 4);

/* ---- trend panel ---- */
grid("trend", [632, 709]);
[[158, 936], [2398, 3576]].forEach(([a, b]) => rect("trend", a, 591, b, 632, "#8a8a8a"));
[[158, 252], [442, 614], [1998, 2493], [2683, 2778], [2930, 3122]].forEach(([a, b]) => rect("trend", a, 632, b, 708, "#666"));
[[0, 5], [81, 158], [252, 291], [327, 537], [897, 993], [1030, 1050], [1087, 1107], [1259, 1278], [1353, 1374], [1733, 1752], [1980, 2114], [2151, 2208], [2265, 2398], [2531, 2550], [2589, 2608], [2646, 2683], [2760, 2873], [2930, 3026], [3159, 3197], [3576, 3595]].forEach(([a, b]) => rect("trend", a, 669, b, 708, "#b0b0b0"));
path("trend", "M0 709H3655", "#7fa020", 5);
rect("trend", 1860, 588, 1872, 713, "#10e8f8");

/* ---- force panel ---- */
grid("force", [912]);
poly("force", "0,893 100,885 200,876 300,875 880,875 920,883 1240,883 1290,891 1770,897 2020,900 2190,888 2550,865 2850,845 3150,812 3234,802 3653,802 3653,826 3510,835 3250,860 3070,867 2980,880 2850,885 2690,902 1990,903 1690,912 1630,917 1290,918 300,915 0,914", "#696969");
line("force", "0,900 200,891 400,887 700,892 980,905 1290,908 1490,898 1790,903 2090,898 2340,890 2580,880 2800,866 3050,845 3234,831 3653,827", "#4a78c8", 3);
line("force", "0,893 150,880 350,888 500,884 700,892 870,913 950,915 1050,907 1290,908 1440,900 1890,905 1990,903 2190,890 2390,875 2580,865 2800,845 3234,804 3330,806 3653,822", "#b030b0", 4);
line("force", "0,887 45,875 63,879 119,861 177,874 195,869 270,895 300,890 330,893 348,884 385,893 440,888 450,883 520,882 540,877 615,902 652,903 670,912 690,903 709,909 730,903 783,917 803,909 843,923 880,938 930,922 965,906 1080,908 1130,904 1146,897 1164,903 1183,897 1260,915 1290,908 1335,898 1355,898 1374,886 1430,905 1450,900 1468,908 1526,890 1545,895 1670,892 1715,903 1752,895 1810,911 1848,905 1885,908 1940,902 1980,903 2039,887 2058,892 2114,877 2133,882 2190,871 2245,888 2300,873 2360,851 2390,850 2438,863 2457,858 2495,868 2551,854 2570,861 2608,849 2627,849 2683,835 2705,842 2760,839 2780,833 2840,828 2893,808 2930,821 2988,803 3008,808 3100,796 3140,807 3196,793 3215,798 3234,794 3254,798 3290,815 3330,820 3348,812 3388,825 3425,819 3462,830 3481,823 3539,831 3595,813 3655,822", "#f4f020", 6);
```
